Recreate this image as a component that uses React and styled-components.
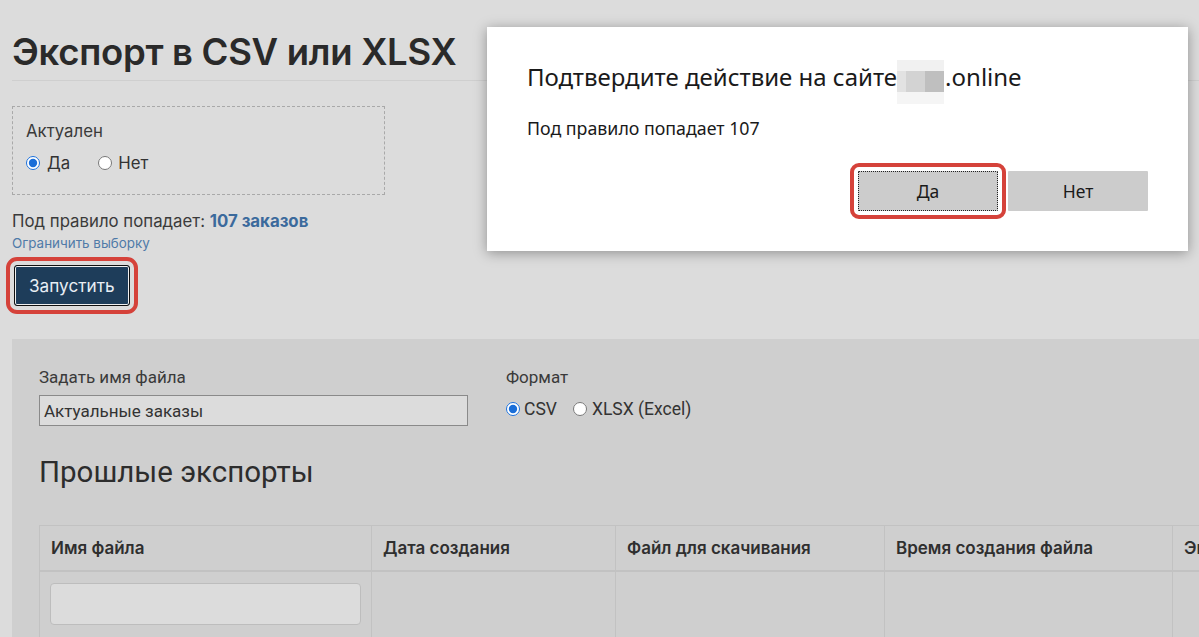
import React from "react";
import styled, { createGlobalStyle } from "styled-components";

const Global = createGlobalStyle`
  html, body { margin: 0; padding: 0; background: #dcdcdc; }
  body { font-family: Inter, "Noto Sans", sans-serif; color: #2b2b2b; overflow: hidden; }
  * { box-sizing: border-box; }
`;

const Page = styled.div`
  position: relative;
  width: 1199px;
  height: 637px;
  overflow: hidden;
  background: #dcdcdc;
  padding: 0 0 0 12px;
`;

const Title = styled.h1`
  margin: 0;
  padding-top: 31px;
  padding-bottom: 6px;
  font-size: 36.5px;
  font-weight: 600;
  letter-spacing: -0.3px;
  line-height: 43px;
  color: #2a2a2a;
  border-bottom: 1px solid #cfcfcf;
`;

const Fieldset = styled.div`
  margin-top: 25px;
  width: 373px;
  height: 89px;
  border: 1px dashed #a9a9a9;
  padding: 14px 13px 0;
`;

const Label = styled.div`
  font-family: ${(p) => p.$font || "inherit"};
  font-size: ${(p) => p.$size || "16.8px"};
  line-height: 20px;
  color: #3a3a3a;
`;

const RadioRow = styled.div`
  display: flex;
  align-items: center;
  gap: ${(p) => p.$gap || "24px"};
  margin-top: ${(p) => p.$mt || "6px"};
`;

const RadioLabel = styled.label`
  display: flex;
  align-items: center;
  gap: ${(p) => p.$gap || "5px"};
  font-size: ${(p) => p.$size || "16.8px"};
  font-family: ${(p) => p.$font || "inherit"};
  color: #333;
`;

const Radio = styled.input.attrs({ type: "radio" })`
  margin: 0;
  width: 14px;
  height: 14px;
  accent-color: #1a6ed8;
`;

const RuleLine = styled.div`
  margin-top: 16px;
  font-size: 16.8px;
  line-height: 20px;
  color: #3a3a3a;
  b { color: #3b6a9c; font-weight: 700; }
`;

const SmallLink = styled.a`
  display: block;
  margin-top: 4px;
  font-size: 13.4px;
  line-height: 16px;
  color: #4f7aa8;
  text-decoration: none;
`;

const RunButton = styled.button`
  display: block;
  margin: 14px 0 0 2px;
  height: 41px;
  padding: 0 14px;
  background: #1e3d5a;
  color: #e8eef4;
  font-family: Inter, sans-serif;
  font-size: 17.2px;
  border: 1px solid #111;
  border-radius: 3px;
  box-shadow: inset 0 0 0 1px #f0f0f0, inset 0 0 0 2px #1e3d5a;
  outline: 4px solid #d5423a;
  outline-offset: 4px;
`;

const Panel = styled.div`
  margin-top: 33px;
  background: #cfcfcf;
  height: 300px;
  padding: 28px 0 0 27px;
`;

const FormRow = styled.div`
  display: flex;
  gap: 38px;
`;

const Field = styled.div`
  display: flex;
  flex-direction: column;
`;

const TextInput = styled.div`
  margin-top: 8px;
  width: 429px;
  height: 31px;
  border: 1px solid #8a8a8a;
  background: #dcdcdc;
  padding: 0 4px;
  display: flex;
  align-items: center;
  font-family: Roboto, "Noto Sans", sans-serif;
  font-size: 17px;
  color: #333;
`;

const SubTitle = styled.h2`
  margin: 28px 0 0;
  font-family: Roboto, sans-serif;
  font-size: 29.5px;
  font-weight: 400;
  line-height: 36px;
  color: #2d2d2d;
`;

const Table = styled.div`
  margin-top: 35px;
  display: grid;
  grid-template-columns: 332px 244px 269px 288px 120px;
  border-top: 1px solid #c2c2c2;
  border-left: 1px solid #c2c2c2;
  width: max-content;
`;

const Th = styled.div`
  height: 46px;
  display: flex;
  align-items: center;
  padding: 0 11px;
  font-size: 17px;
  font-weight: 600;
  color: #2f2f2f;
  border-right: 1px solid #c2c2c2;
  border-bottom: 2px solid #c2c2c2;
  white-space: nowrap;
  overflow: hidden;
`;

const Td = styled.div`
  height: 66px;
  padding: 11px 10px;
  border-right: 1px solid #c2c2c2;
  border-bottom: 1px solid #c2c2c2;
`;

const CellInput = styled.div`
  height: 42px;
  border: 1px solid #bdbdbd;
  border-radius: 4px;
  background: #dcdcdc;
`;

const Dialog = styled.div`
  position: absolute;
  left: 487px;
  top: 27px;
  width: 701px;
  height: 224px;
  background: #fff;
  box-shadow: 0 2px 12px rgba(0, 0, 0, 0.35);
  padding: 35px 40px 0;
  font-family: "Noto Sans", "Open Sans", sans-serif;
  color: #1a1a1a;
`;

const DialogTitle = styled.div`
  font-size: 24px;
  line-height: 30px;
  white-space: nowrap;
`;

const Blur = styled.span`
  display: inline-block;
  vertical-align: middle;
  width: 47px;
  height: 44px;
  margin: -5px 1px -9px 0;
  background:
    linear-gradient(to bottom, #f1f1f1 0 24%, transparent 24% 72%, #f5f5f5 72% 100%),
    linear-gradient(to right, #e2e2e2 0 20%, #d3d3d3 20% 60%, #bfbfbf 60% 100%);
`;

const DialogText = styled.div`
  margin-top: 23px;
  font-size: 17.8px;
  line-height: 20px;
`;

const DialogButtons = styled.div`
  display: flex;
  justify-content: flex-end;
  gap: 10px;
  margin-top: 33px;
`;

const DialogButton = styled.button`
  width: 140px;
  height: 40px;
  background: #cccccc;
  border: ${(p) => (p.$focused ? "1px dotted #222" : "none")};
  font-family: "Noto Sans", "Open Sans", sans-serif;
  font-size: 17.5px;
  color: #1a1a1a;
  outline: ${(p) => (p.$focused ? "4px solid #d5423a" : "none")};
  outline-offset: 4px;
  border-radius: 1px;
`;

export default function App() {
  return (
    <>
      <Global />
      <Page>
        <Title>Экспорт в CSV или XLSX</Title>
        <Fieldset>
          <Label>Актуален</Label>
          <RadioRow $gap="28px" $mt="12px">
            <RadioLabel $gap="7px"><Radio name="a" defaultChecked />Да</RadioLabel>
            <RadioLabel $gap="6px"><Radio name="a" />Нет</RadioLabel>
          </RadioRow>
        </Fieldset>
        <RuleLine>
          Под правило попадает: <b>107 заказов</b>
        </RuleLine>
        <SmallLink href="#">Ограничить выборку</SmallLink>
        <RunButton>Запустить</RunButton>
        <Panel>
          <FormRow>
            <Field>
              <Label $font="Roboto, sans-serif" $size="17px">Задать имя файла</Label>
              <TextInput>Актуальные заказы</TextInput>
            </Field>
            <Field>
              <Label $font="Roboto, sans-serif" $size="17px">Формат</Label>
              <RadioRow $gap="16px" $mt="12px">
                <RadioLabel $gap="4px" $size="17.5px" $font="Roboto, sans-serif"><Radio name="f" defaultChecked />CSV</RadioLabel>
                <RadioLabel $gap="5px" $size="17.5px" $font="Roboto, sans-serif"><Radio name="f" />XLSX (Excel)</RadioLabel>
              </RadioRow>
            </Field>
          </FormRow>
          <SubTitle>Прошлые экспорты</SubTitle>
          <Table>
            <Th>Имя файла</Th>
            <Th>Дата создания</Th>
            <Th>Файл для скачивания</Th>
            <Th>Время создания файла</Th>
            <Th>Экспорт</Th>
            <Td><CellInput /></Td>
            <Td />
            <Td />
            <Td />
            <Td />
          </Table>
        </Panel>
        <Dialog>
          <DialogTitle>
            Подтвердите действие на сайте<Blur />.online
          </DialogTitle>
          <DialogText>Под правило попадает 107</DialogText>
          <DialogButtons>
            <DialogButton $focused>Да</DialogButton>
            <DialogButton>Нет</DialogButton>
          </DialogButtons>
        </Dialog>
      </Page>
    </>
  );
}
